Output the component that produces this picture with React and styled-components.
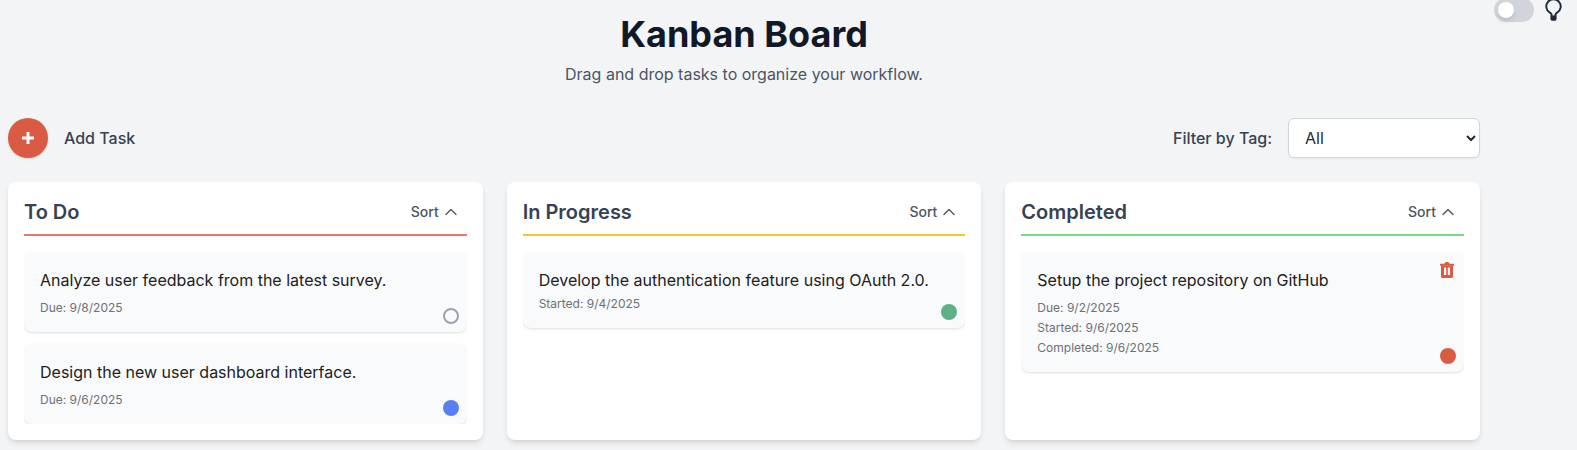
import React, { useState } from "react";
import styled, { createGlobalStyle } from "styled-components";

const GlobalStyle = createGlobalStyle`
  *, *::before, *::after { box-sizing: border-box; }
  body {
    margin: 0;
    background: #f3f4f6;
    font-family: Inter, "Liberation Sans", sans-serif;
    font-size: 16px;
    line-height: 24px;
    color: #1f2937;
    overflow: hidden;
  }
  h1, h2, p { margin: 0; }
  button { font: inherit; border: 0; background: none; cursor: pointer; }
`;

const Page = styled.div`
  position: relative;
  height: 450px;
  padding: 14px 0 0 8px;
`;

const Board = styled.main`
  width: 1472px;
`;

const Heading = styled.header`
  text-align: center;
  margin-bottom: 32px;
`;

const Title = styled.h1`
  font-size: 36px;
  line-height: 40px;
  font-weight: 700;
  color: #111827;
`;

const Subtitle = styled.p`
  margin-top: 8px;
  color: #4b5563;
`;

const ThemeSwitch = styled.div`
  position: absolute;
  top: -2px;
  right: 15px;
  display: flex;
  align-items: center;
  gap: 11.5px;
`;

const Track = styled.button`
  width: 40px;
  height: 24px;
  padding: 4px;
  border-radius: 12px;
  background: #d1d5db;
`;

const Knob = styled.span`
  display: block;
  width: 16px;
  height: 16px;
  border-radius: 50%;
  background: #fff;
  box-shadow: 0 4px 6px -1px rgba(0, 0, 0, 0.1), 0 2px 4px -2px rgba(0, 0, 0, 0.1);
`;

const Toolbar = styled.div`
  display: flex;
  align-items: center;
  justify-content: space-between;
  margin-bottom: 24px;
`;

const Group = styled.div`
  display: flex;
  align-items: center;
  gap: 16px;
  font-weight: 500;
  color: #374151;
`;

const AddButton = styled.button`
  display: flex;
  align-items: center;
  justify-content: center;
  width: 40px;
  height: 40px;
  padding: 0;
  border-radius: 50%;
  color: #fff;
  background: #da5b44;
  box-shadow: 0 1px 3px rgba(0, 0, 0, 0.1), 0 1px 2px -1px rgba(0, 0, 0, 0.1);
`;

const Select = styled.select`
  width: 192px;
  height: 40px;
  padding: 0 0 0 12px;
  font: inherit;
  font-weight: 400;
  color: #1f2937;
  background: #fff;
  border: 1px solid #d1d5db;
  border-radius: 6px;
  box-shadow: 0 1px 2px rgba(0, 0, 0, 0.05);
`;

const Columns = styled.div`
  display: grid;
  grid-template-columns: repeat(3, 1fr);
  gap: 24px;
`;

const Column = styled.section`
  height: 258px;
  padding: 16px;
  border-radius: 8px;
  background: #fff;
  box-shadow: 0 4px 6px -1px rgba(0, 0, 0, 0.1), 0 2px 4px -2px rgba(0, 0, 0, 0.1);
`;

const ColumnHeader = styled.div`
  display: flex;
  align-items: center;
  justify-content: space-between;
  height: 38px;
  padding-bottom: 8px;
  margin-bottom: 16px;
  border-bottom: 2px solid ${(p) => p.$accent};
`;

const ColumnTitle = styled.h2`
  font-size: 20px;
  line-height: 28px;
  font-weight: 600;
  color: #374151;
`;

const SortButton = styled.button`
  display: flex;
  align-items: center;
  gap: 4px;
  padding: 0 8px;
  font-size: 14px;
  line-height: 20px;
  font-weight: 500;
  color: #4b5563;
`;

const CardList = styled.div`
  display: flex;
  flex-direction: column;
  gap: 12px;
  height: 172px;
  overflow: hidden;
`;

const Card = styled.article`
  position: relative;
  padding: 16px;
  border-radius: 8px;
  background: #f9fafb;
  box-shadow: 0 1px 3px rgba(0, 0, 0, 0.1), 0 1px 2px -1px rgba(0, 0, 0, 0.1);
`;

const CardTitle = styled.p`
  color: #212121;
`;

const Meta = styled.p`
  margin-top: ${(p) => (p.$spaced ? 8 : 4)}px;
  font-size: 12px;
  line-height: 16px;
  color: #6e7177;
`;

const Tag = styled.span`
  position: absolute;
  right: 8px;
  bottom: 8px;
  width: 16px;
  height: 16px;
  border-radius: 50%;
  background: ${(p) => p.$color || "transparent"};
  border: ${(p) => (p.$color ? "0" : "2px solid #9ca3af")};
`;

const DeleteButton = styled.button`
  position: absolute;
  top: 10px;
  right: 10px;
  display: flex;
  padding: 0;
  color: #da5b44;
`;

const PlusIcon = () => (
  <svg width="12" height="12" viewBox="0 0 12 12" fill="none" stroke="currentColor" strokeWidth="3">
    <path d="M6 0v12M0 6h12" />
  </svg>
);

const ChevronUp = () => (
  <svg width="16" height="16" viewBox="0 0 24 24" fill="none" stroke="currentColor" strokeWidth="2" strokeLinecap="round" strokeLinejoin="round">
    <path d="M4.5 15.75l7.5-7.5 7.5 7.5" />
  </svg>
);

const TrashIcon = () => (
  <svg width="14" height="16" viewBox="0 0 14 16" fill="none">
    <path d="M0 1.8h4.3L5.2.4Q5.4 0 5.9 0h2.2q.5 0 .7.4l.9 1.4H14v2H0z" fill="currentColor" />
    <path fillRule="evenodd" d="M1 3.5h12v10.9q0 1.6-1.6 1.6H2.6Q1 16 1 14.4zM4 5.4v7.6h2.2V5.4zm3.8 0v7.6H10V5.4z" fill="currentColor" />
  </svg>
);

const BulbIcon = () => (
  <svg width="17" height="24" viewBox="0 0 17 24" fill="none" stroke="#1f2937">
    <path d="M6.6 18v-1.6c-.2-.8-.9-1.2-1.8-1.8a7.2 7.2 0 1 1 7.4 0c-.9.6-1.6 1-1.8 1.8V18" strokeWidth="1.9" />
    <path d="M5.4 17.4h6.2v3q0 2.4-1.8 2.4H7.2q-1.8 0-1.8-2.4z" fill="#1f2937" stroke="none" />
  </svg>
);

const columns = [
  {
    title: "To Do",
    accent: "#e57b70",
    tasks: [
      { title: "Analyze user feedback from the latest survey.", meta: ["Due: 9/8/2025"] },
      { title: "Design the new user dashboard interface.", meta: ["Due: 9/6/2025"], color: "#587ff5" },
    ],
  },
  {
    title: "In Progress",
    accent: "#f1ca25",
    tasks: [
      { title: "Develop the authentication feature using OAuth 2.0.", meta: ["Started: 9/4/2025"], color: "#5cb284" },
    ],
  },
  {
    title: "Completed",
    accent: "#7bd685",
    tasks: [
      {
        title: "Setup the project repository on GitHub",
        meta: ["Due: 9/2/2025", "Started: 9/6/2025", "Completed: 9/6/2025"],
        color: "#da5b44",
        removable: true,
      },
    ],
  },
];

function TaskCard({ task }) {
  return (
    <Card>
      <CardTitle>{task.title}</CardTitle>
      {task.meta.map((line) => (
        <Meta key={line} $spaced={line.startsWith("Due")}>{line}</Meta>
      ))}
      {task.removable && (
        <DeleteButton aria-label="Delete task"><TrashIcon /></DeleteButton>
      )}
      <Tag $color={task.color} />
    </Card>
  );
}

export default function App() {
  const [filter, setFilter] = useState("All");
  return (
    <Page>
      <GlobalStyle />
      <ThemeSwitch>
        <Track aria-label="Toggle theme"><Knob /></Track>
        <BulbIcon />
      </ThemeSwitch>
      <Board>
        <Heading>
          <Title>Kanban Board</Title>
          <Subtitle>Drag and drop tasks to organize your workflow.</Subtitle>
        </Heading>
        <Toolbar>
          <Group>
            <AddButton aria-label="Add task"><PlusIcon /></AddButton>
            <span>Add Task</span>
          </Group>
          <Group>
            <label htmlFor="tag">Filter by Tag:</label>
            <Select id="tag" value={filter} onChange={(e) => setFilter(e.target.value)}>
              <option>All</option>
            </Select>
          </Group>
        </Toolbar>
        <Columns>
          {columns.map((column) => (
            <Column key={column.title}>
              <ColumnHeader $accent={column.accent}>
                <ColumnTitle>{column.title}</ColumnTitle>
                <SortButton>Sort <ChevronUp /></SortButton>
              </ColumnHeader>
              <CardList>
                {column.tasks.map((task) => <TaskCard key={task.title} task={task} />)}
              </CardList>
            </Column>
          ))}
        </Columns>
      </Board>
    </Page>
  );
}
